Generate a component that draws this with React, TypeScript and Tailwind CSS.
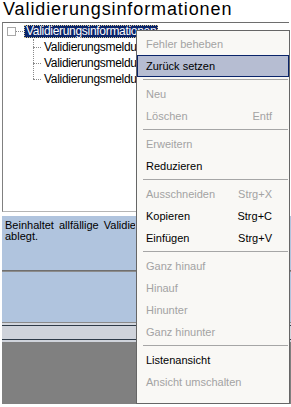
const FONT = "font-['Liberation_Sans',Arial,sans-serif]";

type MenuEntry =
  | { kind: "item"; label: string; shortcut?: string; disabled?: boolean; active?: boolean }
  | { kind: "sep" };

const MENU: MenuEntry[] = [
  { kind: "item", label: "Fehler beheben", disabled: true },
  { kind: "item", label: "Zurück setzen", active: true },
  { kind: "sep" },
  { kind: "item", label: "Neu", disabled: true },
  { kind: "item", label: "Löschen", shortcut: "Entf", disabled: true },
  { kind: "sep" },
  { kind: "item", label: "Erweitern", disabled: true },
  { kind: "item", label: "Reduzieren" },
  { kind: "sep" },
  { kind: "item", label: "Ausschneiden", shortcut: "Strg+X", disabled: true },
  { kind: "item", label: "Kopieren", shortcut: "Strg+C" },
  { kind: "item", label: "Einfügen", shortcut: "Strg+V" },
  { kind: "sep" },
  { kind: "item", label: "Ganz hinauf", disabled: true },
  { kind: "item", label: "Hinauf", disabled: true },
  { kind: "item", label: "Hinunter", disabled: true },
  { kind: "item", label: "Ganz hinunter", disabled: true },
  { kind: "sep" },
  { kind: "item", label: "Listenansicht" },
  { kind: "item", label: "Ansicht umschalten", disabled: true },
];

function ContextMenu() {
  return (
    <div className="absolute left-[136px] top-[30px] w-[154px] h-[374px] border border-[#666666] bg-[#f9f8f5] pt-[2px] pb-[10px]">
      {MENU.map((entry, i) => {
        if (entry.kind === "sep") {
          return (
            <div key={i} className="h-[6px] pl-[6px] pr-[1px] pt-[2px]">
              <div className="h-[1px] bg-[#a6a6a6]" />
            </div>
          );
        }
        const tone = entry.disabled ? "text-[#a3a3a3]" : "text-black";
        return (
          <div
            key={i}
            className={
              entry.active
                ? `flex h-[22px] items-center justify-between border border-[#0a246a] bg-[#b6bdd2] pl-[8px] pr-[16px] text-[11px] ${tone}`
                : `flex h-[22px] items-center justify-between pl-[9px] pr-[17px] text-[11px] ${tone}`
            }
          >
            <span>{entry.label}</span>
            {entry.shortcut && <span>{entry.shortcut}</span>}
          </div>
        );
      })}
    </div>
  );
}

function TreeChild({ label }: { label: string }) {
  return (
    <div className="flex h-[16px] w-[104px] items-center overflow-hidden">
      <div className="w-[8px] shrink-0 border-t border-dotted border-[#8a8a8a]" />
      <span className="ml-[3px] whitespace-nowrap text-[12px] tracking-[-0.3px] text-black">{label}</span>
    </div>
  );
}

function Tree() {
  return (
    <div className="mx-[2px] h-[190px] border-t border-l border-b border-t-[#6e6e6e] border-l-[#808080] border-b-[#b5b5b5] bg-white pl-[4px] pt-[1px]">
      <div className="flex h-[14px] items-center">
        <div className="h-[9px] w-[9px] border border-[#a8a8a8] bg-white" />
        <div className="w-[7px] border-t border-dotted border-[#8a8a8a]" />
        <div className="ml-[1px] flex h-[13px] w-[134px] items-center border border-dotted border-[#d8c890] bg-[#0a246a] pl-[1px] text-[12px] tracking-[-0.3px] text-white">
          Validierungsinformationen
        </div>
      </div>
      <div className="ml-[26px] flex">
        <div className="mt-[1px] h-[40px] border-l border-dotted border-[#8a8a8a]" />
        <div className="-ml-[1px] pt-[1px]">
          <TreeChild label="Validierungsmeldung 1" />
          <TreeChild label="Validierungsmeldung 2" />
          <TreeChild label="Validierungsmeldung 3" />
        </div>
      </div>
    </div>
  );
}

export default function App() {
  return (
    <div className={`relative h-[407px] w-[291px] overflow-hidden bg-white ${FONT}`}>
      <div className="h-[22px] pl-[3px] text-[18px] leading-[19px] tracking-[0.9px] text-black">
        Validierungsinformationen
      </div>
      <Tree />
      <div className="mt-[4px] ml-[2px]">
        <div className="h-[54px] bg-[#b0c4de] px-[3px] pt-[4px] text-[11px] leading-[11px] text-black">
          <div className="w-[130px] overflow-hidden whitespace-nowrap [word-spacing:2px]">
            Beinhaltet allfällige Validierungsmeldungen, welche das System
          </div>
          <div>ablegt.</div>
        </div>
        <div className="h-[1px] bg-[#6f6f6f]" />
        <div className="h-[1px] bg-[#8c8c8c]" />
        <div className="h-[50px] bg-[#b0c4de]" />
        <div className="h-[1px] bg-[#8a8a8a]" />
        <div className="h-[2px] bg-[#d2d6de]" />
        <div className="h-[1px] bg-[#2e3a48]" />
        <div className="h-[13px] bg-[#cfd3db]" />
        <div className="h-[1px] bg-[#2e3a48]" />
        <div className="h-[2px] bg-[#cfd3db]" />
        <div className="h-[62px] bg-[#808080]" />
      </div>
      <ContextMenu />
    </div>
  );
}
